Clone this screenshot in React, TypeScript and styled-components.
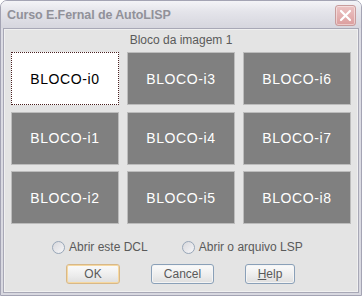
import React from 'react'
import styled, { createGlobalStyle } from 'styled-components'

const GlobalStyle = createGlobalStyle`
  html, body {
    margin: 0;
    padding: 0;
    background: #ffffff;
  }
`

const Window = styled.div`
  width: 362px;
  height: 296px;
  box-sizing: border-box;
  border: 1px solid #a4a4b4;
  border-radius: 7px 7px 0 0;
  background: linear-gradient(#f2f2f6, #dcdce4 28px, #d8d8e0);
  display: flex;
  flex-direction: column;
  overflow: hidden;
`

const TitleBar = styled.div`
  height: 27px;
  display: flex;
  align-items: center;
  justify-content: space-between;
  padding: 0 5px 0 6px;
  background: linear-gradient(#f4f4f7, #e4e4ea 40%, #d6d6de);
`

const Title = styled.span`
  font-family: 'Liberation Sans', Arial, sans-serif;
  font-weight: bold;
  font-size: 12.5px;
  color: #919199;
  letter-spacing: -0.1px;
  margin-top: 1px;
`

const CloseButton = styled.div`
  width: 19px;
  height: 19px;
  margin-top: 2px;
  border: 1px solid #c89c9c;
  border-radius: 3px;
  background: linear-gradient(#ecc4c4, #dc9e9e);
  display: flex;
  align-items: center;
  justify-content: center;
  box-shadow: inset 0 0 0 1px rgba(255, 255, 255, 0.45);
`

const Body = styled.div`
  flex: 1;
  margin: 0 2px 2px 2px;
  border: 1px solid #a8a8b6;
  box-shadow: inset 0 0 0 1px #f0f0f0;
  background: #e4e4e4;
  display: flex;
  flex-direction: column;
  font-family: 'Liberation Sans', Arial, sans-serif;
  font-size: 11px;
  color: #4a4a4a;
`

const Caption = styled.div`
  margin-top: 4px;
  height: 15px;
  line-height: 15px;
  text-align: center;
  font-size: 12px;
  color: #5a5a5a;
`

const Grid = styled.div`
  margin: 4px 0 0 7px;
  display: grid;
  grid-template-columns: repeat(3, 108px);
  grid-template-rows: repeat(3, 53px);
  column-gap: 8px;
  row-gap: 6.5px;
`

const Tile = styled.div<{ $active?: boolean }>`
  box-sizing: border-box;
  display: flex;
  align-items: center;
  justify-content: center;
  font-family: 'Liberation Sans', Arial, sans-serif;
  font-size: 14px;
  letter-spacing: 0.6px;
  background: ${(p) => (p.$active ? '#ffffff' : '#808080')};
  color: ${(p) => (p.$active ? '#000000' : '#ffffff')};
  border: ${(p) => (p.$active ? '1px dotted #4a2020' : '1px solid #bcbcbc')};
`

const RadioRow = styled.div`
  margin: 17px 0 0 48px;
  height: 12px;
  display: flex;
  align-items: center;
  gap: 34px;
`

const RadioItem = styled.label`
  display: flex;
  align-items: center;
  gap: 4px;
  font-size: 12px;
  color: #5a5a5a;
`

const RadioDot = styled.span`
  width: 11px;
  height: 11px;
  border-radius: 50%;
  border: 1px solid #98a6b8;
  background: linear-gradient(135deg, #d8d8dc, #f6f6f8);
`

const ButtonRow = styled.div`
  margin: 11px 0 0 62px;
  display: flex;
  gap: 31px;
`

const Button = styled.div<{ $w: number; $default?: boolean }>`
  box-sizing: border-box;
  width: ${(p) => p.$w}px;
  height: 20px;
  border: 1px solid ${(p) => (p.$default ? '#d8b888' : '#8aa0b8')};
  border-radius: 3px;
  background: linear-gradient(#fbfbfb, #ececec 60%, #dedede);
  box-shadow: ${(p) => (p.$default ? 'inset 0 0 0 1px #f6d8a0' : 'inset 0 0 0 1px #f4f4f4')};
  display: flex;
  align-items: center;
  justify-content: center;
  font-size: 12px;
  color: #5a5a5a;

  u {
    text-decoration: underline;
  }
`

const blocks = ['i0', 'i3', 'i6', 'i1', 'i4', 'i7', 'i2', 'i5', 'i8']

export default function App() {
  return (
    <>
      <GlobalStyle />
      <Window>
        <TitleBar>
          <Title>Curso E.Fernal de AutoLISP</Title>
          <CloseButton>
            <svg width="13" height="13" viewBox="0 0 13 13">
              <path d="M2 2 L11 11 M11 2 L2 11" stroke="#ffffff" strokeWidth="2.2" strokeLinecap="round" />
            </svg>
          </CloseButton>
        </TitleBar>
        <Body>
          <Caption>Bloco da imagem 1</Caption>
          <Grid>
            {blocks.map((b, i) => (
              <Tile key={b} $active={i === 0}>
                BLOCO-{b}
              </Tile>
            ))}
          </Grid>
          <RadioRow>
            <RadioItem>
              <RadioDot />
              Abrir este DCL
            </RadioItem>
            <RadioItem>
              <RadioDot />
              Abrir o arquivo LSP
            </RadioItem>
          </RadioRow>
          <ButtonRow>
            <Button $w={54} $default>
              OK
            </Button>
            <Button $w={63}>Cancel</Button>
            <Button $w={50}>
              <span>
                <u>H</u>elp
              </span>
            </Button>
          </ButtonRow>
        </Body>
      </Window>
    </>
  )
}
